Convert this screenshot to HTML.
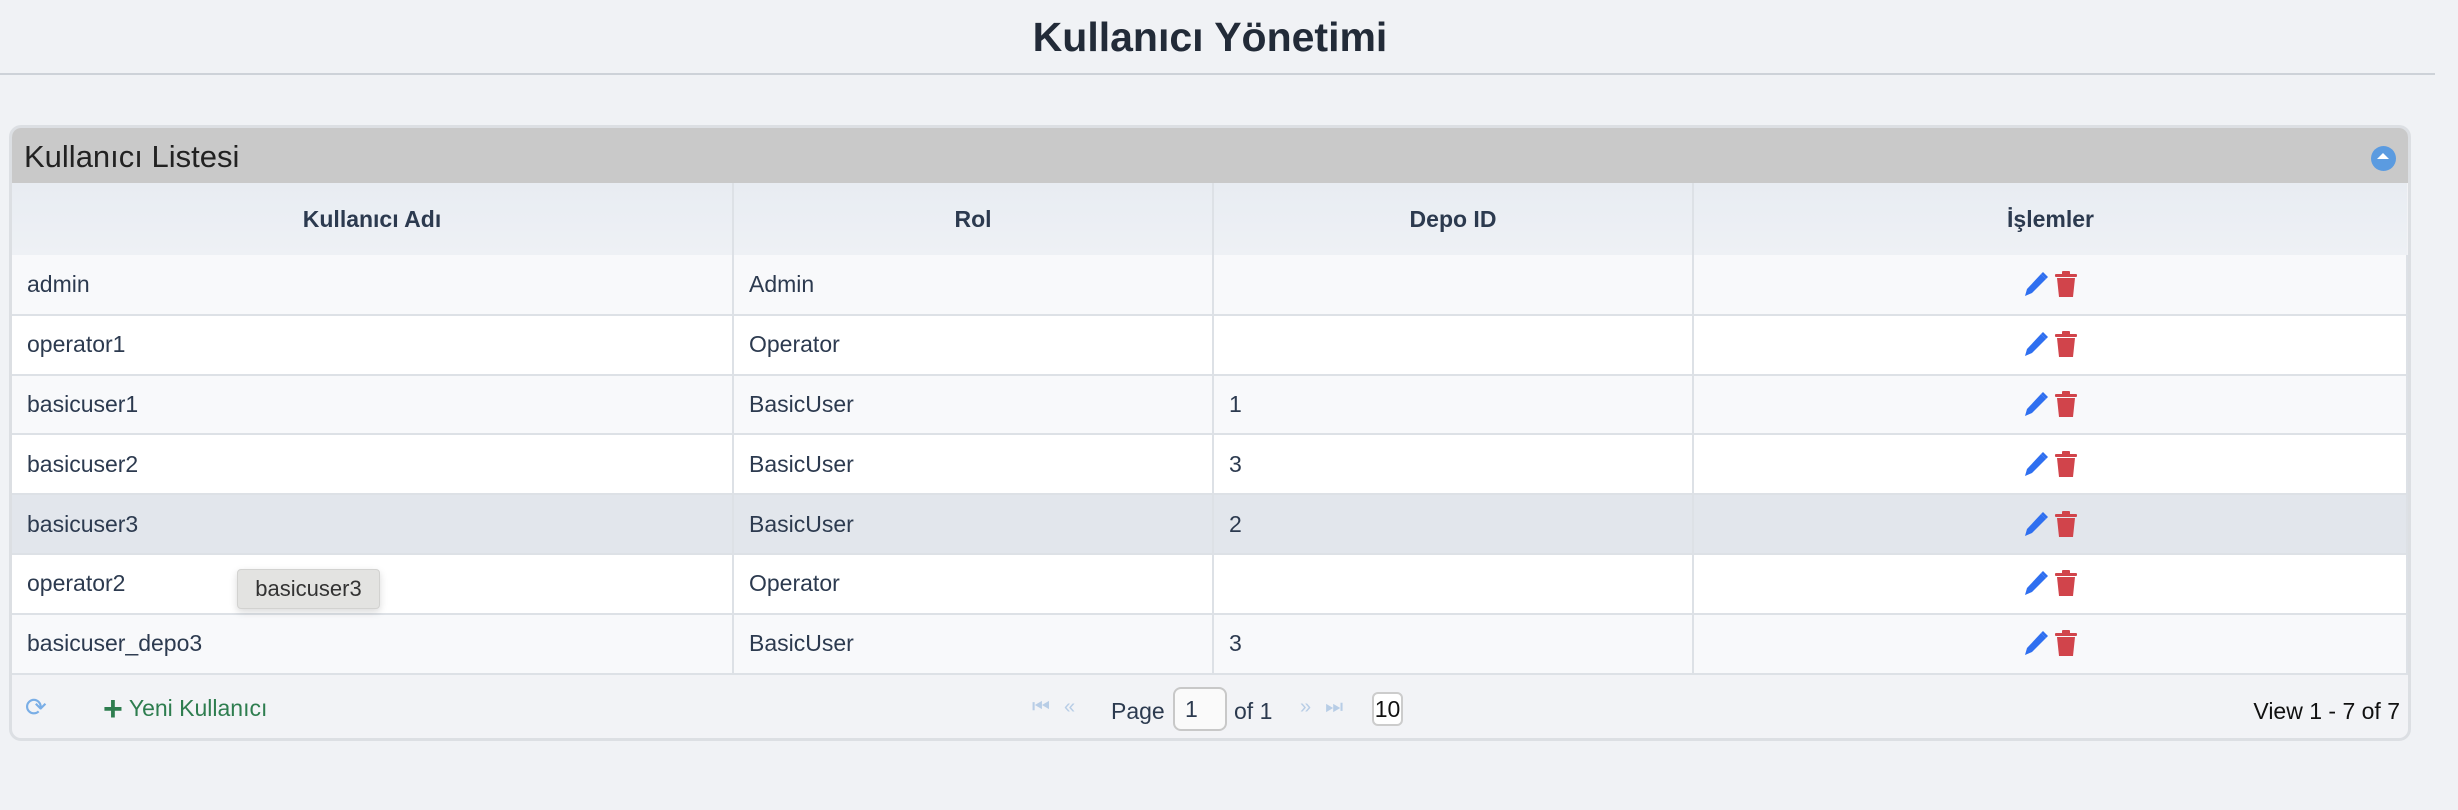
<!DOCTYPE html>
<html><head><meta charset="utf-8"><style>
*{box-sizing:border-box;margin:0;padding:0}
body{width:2458px;height:810px;background:#f0f2f5;font-family:"Liberation Sans","DejaVu Sans",sans-serif;position:relative;overflow:hidden;color:#2c3a4f}
h1{position:absolute;top:14px;left:0;width:2420px;text-align:center;font-size:41px;font-weight:bold;color:#222b38}
.hr{position:absolute;left:0;top:73px;width:2435px;height:2px;background:#cdd2d8}
.panel{position:absolute;left:9px;top:125px;width:2402px;height:616px;border:3px solid #dcdfe3;border-radius:12px;background:#f2f3f6;overflow:hidden}
.cap{position:absolute;left:0;top:0;width:100%;height:55px;background:#c9c9c9;font-size:31px;padding-left:12px;line-height:57px;color:#222}
.col{position:absolute;right:12px;top:18px;width:25px;height:25px;border-radius:50%;background:#5b9be0}
.col:after{content:"";position:absolute;left:6px;top:7px;border:6px solid transparent;border-bottom:6px solid #fff;border-top:0}
table{position:absolute;left:0;top:55px;width:2396px;border-collapse:collapse;font-size:23px}
th{height:72px;background:linear-gradient(#e8ecf2,#eef1f5);font-weight:bold;border-right:2px solid #dde1e6;color:#2c3a4f}
td{height:59.8px;border-right:2px solid #dde1e6;border-bottom:2px solid #dde1e6;padding-left:15px;color:#2c3a4f}
tr:nth-child(odd) td{background:#f8f9fb}tr:nth-child(even) td{background:#fff}
tr.hl td{background:#e2e6ec!important}
td.a{text-align:center;padding:0}
.ic{display:inline-block;vertical-align:middle;margin:0 2px}
.ft{position:absolute;left:0;top:546px;width:100%;height:70px;font-size:23px}
.tip{position:absolute;left:237px;top:569px;width:143px;height:40px;background:#e3e3e1;border:1px solid #d2d2d0;border-radius:4px;box-shadow:0 3px 8px rgba(0,0,0,.15);font-size:22px;line-height:38px;text-align:center;color:#333}
</style></head><body>
<h1>Kullanıcı Yönetimi</h1><div class="hr"></div>
<div class="panel">
<div class="cap">Kullanıcı Listesi<div class="col"></div></div>
<table>
<tr><th style="width:721px">Kullanıcı Adı</th><th style="width:480px">Rol</th><th style="width:480px">Depo ID</th><th style="border-right:0">İşlemler</th></tr>
<tbody>
<tr><td>admin</td><td>Admin</td><td></td><td class="a">ICON</td></tr>
<tr><td>operator1</td><td>Operator</td><td></td><td class="a">ICON</td></tr>
<tr><td>basicuser1</td><td>BasicUser</td><td>1</td><td class="a">ICON</td></tr>
<tr><td>basicuser2</td><td>BasicUser</td><td>3</td><td class="a">ICON</td></tr>
<tr class="hl"><td>basicuser3</td><td>BasicUser</td><td>2</td><td class="a">ICON</td></tr>
<tr><td>operator2</td><td>Operator</td><td></td><td class="a">ICON</td></tr>
<tr><td>basicuser_depo3</td><td>BasicUser</td><td>3</td><td class="a">ICON</td></tr>
</tbody></table>
<div class="ft">
<span style="position:absolute;left:13px;top:18px;color:#7aaee6;font-size:26px">⟳</span>
<span style="position:absolute;left:91px;top:14px;color:#2e7d4f;font-size:23px;line-height:40px"><b style="font-size:34px;vertical-align:-4px">+</b> Yeni Kullanıcı</span>
<span style="position:absolute;left:1020px;top:22px;color:#b8cde6;font-size:20px;letter-spacing:14px">⏮«</span>
<span style="position:absolute;left:1099px;top:24px">Page</span>
<span style="position:absolute;left:1161px;top:13px;width:54px;height:44px;border:2px solid #c8c8c8;border-radius:8px;background:#fafafa;padding-left:10px;line-height:40px">1</span>
<span style="position:absolute;left:1222px;top:24px">of 1</span>
<span style="position:absolute;left:1288px;top:22px;color:#b8cde6;font-size:20px;letter-spacing:14px">»⏭</span>
<span style="position:absolute;left:1360px;top:18px;width:31px;height:34px;border:2px solid #ccc;border-radius:6px;background:#fff;line-height:30px;text-align:center;color:#111">10</span>
<span style="position:absolute;right:8px;top:24px;color:#111">View 1 - 7 of 7</span>
</div></div>
<div class="tip">basicuser3</div>
<script>
var ic='<svg class="ic" width="28" height="28" viewBox="0 0 28 28"><path d="M19 3l5 5-14 14-7 3 2-7z" fill="#2f6ff0"/><path d="M19 3l2-2 5 5-2 2z" fill="#2f6ff0"/></svg><svg class="ic" width="24" height="28" viewBox="0 0 24 28"><rect x="1" y="3" width="22" height="3" rx="1" fill="#d1444b"/><rect x="8" y="0" width="8" height="4" rx="1" fill="#d1444b"/><path d="M3 7h18l-2 19H5z" fill="#d1444b"/></svg>';
document.querySelectorAll('td.a').forEach(function(t){t.innerHTML=ic});
</script>
</body></html>
